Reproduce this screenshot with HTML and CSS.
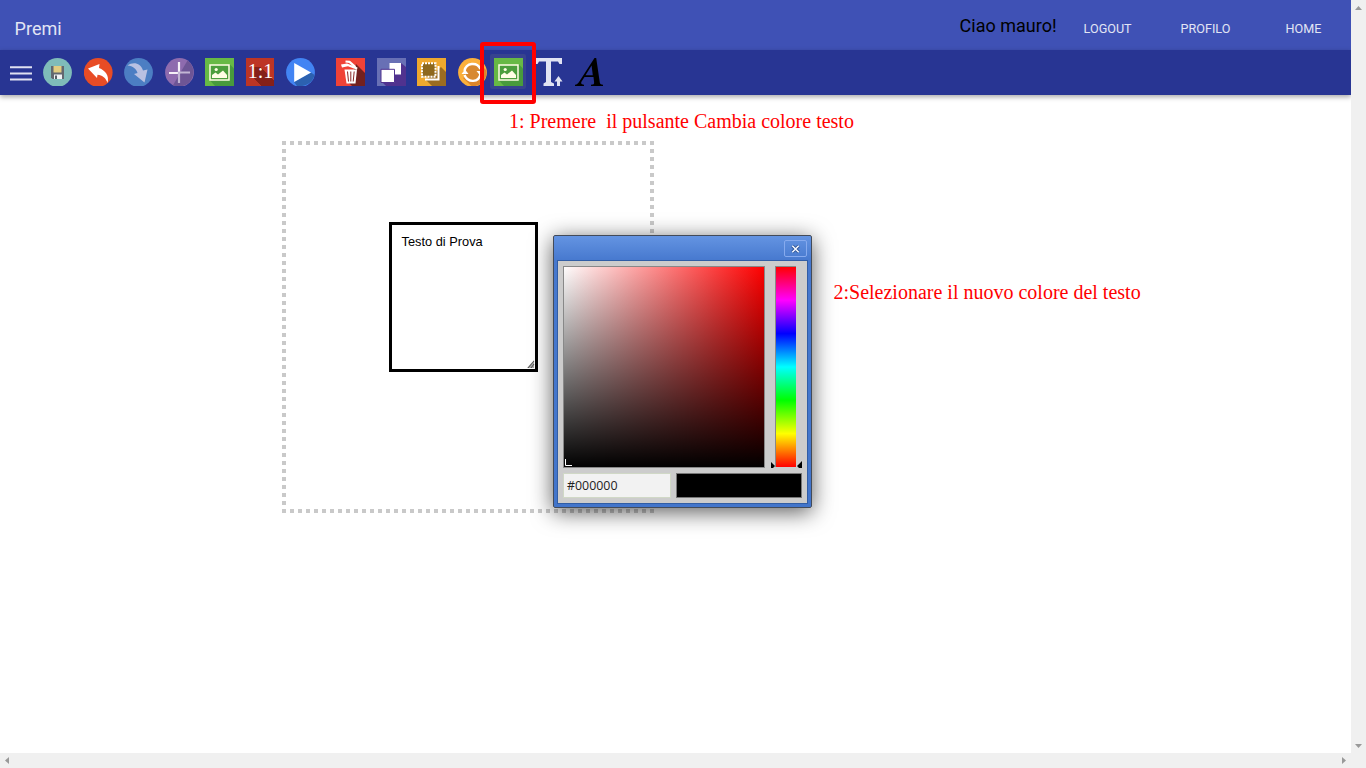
FILE: index.html
```html
<!DOCTYPE html>
<html lang="it">
<head>
<meta charset="utf-8">
<title>Premi</title>
<link rel="stylesheet" href="styles.css">
</head>
<body>
<div class="window">
<div class="page">
  <header class="topbar">
    <span class="brand">Premi</span>
    <span class="hello">Ciao mauro!</span>
    <nav class="nav"><a class="logout">LOGOUT</a><a class="profile">PROFILO</a><a class="home">HOME</a></nav>
  </header>
  <div class="toolbar">
    <svg class="menu" viewBox="0 0 22 16"><path d="M0 1.2h22M0 7.4h22M0 13.6h22" stroke="#dfe1f2" stroke-width="2"/></svg>
    <div class="tools">
      <svg class="icon" viewBox="0 0 29 28"><circle cx="14.5" cy="14.4" r="14.4" fill="#7fbcb9"/><path d="M8 8h13v13H9.500L8 19.500z" fill="#63686f"/><path d="M10.500 8h8v6.500h-8z" fill="#e2cd80"/><path d="M11 16.500h8V21h-8z" fill="#f1f2f4"/><path d="M12 17.500h2V21h-2z" fill="#555d65"/></svg>
      <svg class="icon" viewBox="0 0 29 28"><circle cx="14.2" cy="14.4" r="14.4" fill="#e84c25"/><path d="M4 10.500 15.500 6l-.5 4c6.500 2.500 10.500 8 8.500 15-1.500-5-5-8-10-8.300L13 20z" fill="#fff"/></svg>
      <svg class="icon" viewBox="0 0 29 28"><circle cx="14.5" cy="14.4" r="14.4" fill="#4c7ec3"/><path d="M3.500 7.500C9 3.500 16.500 4.500 19 12.500l4.500-1-3 13-10.500-8.500 3.500-1C12.500 11 9 8 3.500 7.500z" fill="#b9c1e2"/></svg>
      <svg class="icon" viewBox="0 0 29 28"><circle cx="14.5" cy="14.4" r="14.4" fill="#8e6bae"/><path d="M22.500 2.500A14.400 14.400 0 0 1 8 27.200z" fill="#6d5595"/><path d="M14 4v11H4" fill="none" stroke="#f5f0f7" stroke-width="2.200"/><path d="M14 25V14.500H25" fill="none" stroke="#c2b6d4" stroke-width="2.200"/></svg>
      <svg class="icon" viewBox="0 0 29 28"><path d="M0 0h29v28H0z" fill="#67b945"/><path d="M25 6.500l4 4V28H10l-5-5.500z" fill="#489b3c"/><path d="M5 7h19v15H5z" fill="#4c9e3d" stroke="#fffde5" stroke-width="1.500"/><circle cx="11.200" cy="11.500" r="1.600" fill="#fffde5"/><path d="M7 20v-3l3.500-2.500 2.500 2 5-4 4 4.500v3z" fill="#fffde5"/></svg>
      <span class="ratio">1:1</span>
      <svg class="icon" viewBox="0 0 29 28"><circle cx="14.5" cy="14.4" r="14.400" fill="#4284f3"/><path d="M25 14.500l3.500 2.500C26.500 25 20 29 11 28l-3-4z" fill="#2c61b0"/><path d="M8.200 5 25 14.500 8.200 24z" fill="#fff"/></svg>
    </div>
    <div class="tools edit-tools">
      <svg class="icon" viewBox="0 0 29 28"><path d="M0 0h29v28H0z" fill="#f04237"/><path d="M20 6l9 9v13H16L13 25z" fill="#73211f"/><path d="M5 6.500l6-1 10.500 4-.5 2.200-9-3.400L6 9.500z" fill="#fff"/><path d="M9.500 3.500l4 .3 6 5.200" fill="none" stroke="#fff" stroke-width="2.200"/><path d="M8.500 11.500h12.500L19.500 25.500h-9z" fill="#fff"/><path d="M11.500 13.500l1 10M14.800 13.500v10M18.200 13.500l-1 10" stroke="#8a2525"/></svg>
      <svg class="icon" viewBox="0 0 29 28"><path d="M0 0h29v28H0z" fill="#6870b5"/><path d="M24 5l5 4v19H9l-4-4z" fill="#50328f"/><path d="M12.500 5H24v11.500H12.500z" fill="#fff"/><path d="M4 11.300H17.500V24.500H4z" fill="#fff" stroke="#50328f"/></svg>
      <svg class="icon" viewBox="0 0 29 28"><path d="M0 0h29v28H0z" fill="#efa82e"/><path d="M24 9l5 5v14H15l-6-6z" fill="#9b6c21"/><path d="M5 5.200h13.500v13.500H5z" fill="#8e681d" stroke="#fff" stroke-width="2" stroke-dasharray="2 1"/><path d="M21.500 8v13.500H8" fill="none" stroke="#fff" stroke-width="2"/></svg>
      <svg class="icon" viewBox="0 0 29 28"><circle cx="14.5" cy="14.4" r="14.400" fill="#fbb03b"/><path d="M24 8l4 4c2 8-4 16-14 16.500L5 20z" fill="#dc852a"/><circle cx="14.500" cy="14.400" r="8.500" fill="#d88930"/><path d="M6.500 13C8 4.500 19 3.500 22.500 11M22.500 16C21 24.500 10 25.500 6.500 17" fill="none" stroke="#fff" stroke-width="2.400"/><path d="M3.500 16h7L7 11.500zM18.500 13h7L22 17.500z" fill="#fff"/></svg>
    </div>
    <span class="active-tool"><svg class="icon" viewBox="0 0 29 28"><path d="M0 0h29v28H0z" fill="#67b945"/><path d="M25 6.500l4 4V28H10l-5-5.500z" fill="#489b3c"/><path d="M5 7h19v15H5z" fill="#4c9e3d" stroke="#fffde5" stroke-width="1.500"/><circle cx="11.200" cy="11.500" r="1.600" fill="#fffde5"/><path d="M7 20v-3l3.500-2.500 2.500 2 5-4 4 4.500v3z" fill="#fffde5"/></svg></span>
    <svg class="icon size" viewBox="0 0 29 28"><path d="M0 0h27v6h-2.500L23 3.500h-7V24l3 1.500V28H8.500v-2.500L11 24V3.500H4L2.500 6H0z" fill="#e1e3f3"/><path d="M23.500 18l4 5.500H25V28h-3v-4.500h-2.500z" fill="#e1e3f3"/></svg>
    <svg class="icon fontface" viewBox="0 0 29 28"><path d="M19.500 0h1.700l3.600 24.500c.2 1.500 1 2 3.200 2.200V28H16v-1.300c2.500-.1 3.300-.5 3.100-2.500l-.6-5.200H9.500l-2.600 4c-1.400 2.300-.8 3.400 2.100 3.700V28H0v-1.300c2-.3 3-1.200 4.500-3.500zm-2.900 7.500L10.500 17.200h7.300z" fill="#000"/></svg>
  </div>
  <main class="canvas">
    <svg class="slide-frame" viewBox="0 0 372 372"><path d="M0 2h372M0 370h372M2 0v372M370 0v372" stroke="#c9c9c9" stroke-width="4" stroke-dasharray="4 4"/></svg>
    <div class="textbox">Testo di Prova<svg class="grip" viewBox="0 0 8 8"><path d="M0 8 7 0v8z" fill="#aaa"/><path d="M1 8l6-7M4 8l3-4" stroke="#555"/></svg></div>
    <p class="note step-one">1: Premere&nbsp; il pulsante Cambia colore testo</p>
    <p class="note step-two">2:Selezionare il nuovo colore del testo</p>
    <div class="dialog">
      <div class="titlebar"><span class="close"><svg viewBox="0 0 10 10"><path d="M1 1l8 8M9 1 1 9" stroke="#294f91" stroke-width="4"/><path d="M1 1l8 8M9 1 1 9" stroke="#f4f7ff" stroke-width="2"/></svg></span></div>
      <div class="picker">
        <div class="pickers"><div class="shade"><svg viewBox="0 0 8 8"><path d="M.5 0v6.500H7" fill="none" stroke="#fff"/></svg></div><div class="hue"><svg viewBox="0 0 32 8"><path d="M1 1v6h2l2-2zM32 0v7h-3l-2-2z" fill="#000"/></svg></div></div>
        <div class="values"><span class="hex">#000000</span><span class="swatch"></span></div>
      </div>
    </div>
    <div class="highlight"></div>
  </main>
</div>
<div class="vscroll"><svg viewBox="0 0 7 4"><path d="M0 4 3.500 0 7 4z"/></svg><svg viewBox="0 0 7 4"><path d="M0 0h7L3.500 4z"/></svg></div>
<div class="hscroll"><svg viewBox="0 0 4 7"><path d="M4 0v7L0 3.500z"/></svg><svg viewBox="0 0 4 7"><path d="M0 0l4 3.500L0 7z"/></svg></div>
<div class="corner"></div>
</div>
</body>
</html>
```

FILE: styles.css
```css
* { box-sizing: border-box; }
body { margin: 0; background: #fff; font-family: Roboto, sans-serif; overflow: hidden; }
svg { display: block; }
.window { display: grid; grid-template: 753px 15px / 1351px 15px; width: 1366px; height: 768px; }
.page { position: relative; display: flex; flex-direction: column; overflow: hidden; }
.topbar { display: flex; height: 50px; padding-left: 14.600px; background: #3f51b5; color: #e2e5f4; }
.brand { width: 945px; padding-top: 18px; font-size: 18px; line-height: 22px; }
.hello { width: 124px; padding-top: 15px; font-size: 18px; line-height: 22px; color: #000; }
.nav { display: flex; padding-top: 20px; font-size: 12.6px; line-height: 18px; }
.logout { width: 97px; }
.profile { width: 105px; }
.toolbar { display: flex; flex: none; align-items: flex-start; height: 45px; padding: 8px 0 0 10px; background: #283593; box-shadow: 0 2px 5px rgba(0,0,0,.34); }
.menu { width: 22px; height: 16px; margin: 8px 11px 0 0; }
.tools { display: flex; gap: 11.5px; }
.icon { width: 29px; height: 28px; flex: none; }
.edit-tools { margin-left: 21px; }
.ratio { width: 28px; height: 28px; margin-right: 1px; padding-left: 2px; background: linear-gradient(45deg, transparent 24%, #852019 24% 68%, transparent 68%) 6px 9px / 22px 19px no-repeat #bd3525; color: #fff; text-align: center; font: 20px/27px "Liberation Serif", serif; }
.active-tool { flex: none; width: 36px; height: 35px; margin: -4px 0 0 3.500px; padding: 4px; border-radius: 2px; background: #37438f; }
.size { margin-left: 9px; }
.fontface { margin-left: 11px; }
.canvas { flex: 1; }
.slide-frame { position: absolute; left: 282px; top: 141px; width: 372px; height: 372px; }
.textbox { position: absolute; left: 389px; top: 222px; width: 149px; height: 150px; padding: 9px 9.600px; border: 3px solid #000; background: #fff; font: 12.8px/16px "Liberation Sans", sans-serif; }
.grip { position: absolute; right: 0; bottom: 1px; width: 8px; height: 8px; }
.note { position: absolute; margin: 0; color: #f00; font: 20px/24px "Liberation Serif", serif; white-space: nowrap; }
.step-one { left: 509px; top: 109px; }
.step-two { left: 833.5px; top: 280px; }
.dialog { position: absolute; left: 553px; top: 235px; width: 259px; height: 273px; padding: 0 3px 3px; border: 1px solid #434b59; border-radius: 2px; background: linear-gradient(#6494e2, #4678ce 25px, #4275cb); box-shadow: 0 4px 22px rgba(0,0,0,.65); }
.titlebar { display: flex; justify-content: flex-end; height: 24px; padding: 4px 1px 0 0; }
.close { display: flex; align-items: center; justify-content: center; width: 23px; height: 17px; border: 1px solid #86aaee; border-radius: 2px; }
.close svg { width: 9px; height: 8px; overflow: visible; }
.picker { height: 244px; padding: 5px; border: 1px solid #315da5; background: #ccc; }
.pickers { display: flex; gap: 10px; }
.shade { display: flex; align-items: flex-end; width: 202px; height: 202px; border: 1px solid #888; background: linear-gradient(transparent, #000), linear-gradient(90deg, #fff, #f00); background-origin: border-box; }
.shade svg { width: 8px; height: 8px; margin-left: 1px; }
.hue { position: relative; width: 21px; height: 201px; border: 1px solid #888; border-width: 1px 0 0 1px; background: linear-gradient(#f00, #f0f, #00f, #0ff, #0f0, #ff0, #f00); }
.hue svg { position: absolute; left: -6px; bottom: -2px; width: 32px; height: 8px; }
.values { display: flex; gap: 5px; padding-top: 5px; }
.hex { width: 108px; height: 25px; padding-left: 3px; border: 1px solid #d0d8c6; background: #f2f2f2; color: #222; font: 12.4px/24px "Open Sans", sans-serif; }
.swatch { width: 126px; height: 25px; border: 1px solid #777; background: #000; }
.highlight { position: absolute; left: 480px; top: 42px; width: 56px; height: 62px; border: 4px solid #f00; border-radius: 3px; }
.vscroll, .hscroll { display: flex; align-items: center; justify-content: space-between; background: #f0f0f0; fill: #999; }
.vscroll { flex-direction: column; padding: 6px 0 5px; }
.hscroll { padding: 0 5px; }
.vscroll svg { width: 7px; height: 4px; }
.hscroll svg { width: 4px; height: 7px; }
.corner { background: #f0f0f0; }
```
